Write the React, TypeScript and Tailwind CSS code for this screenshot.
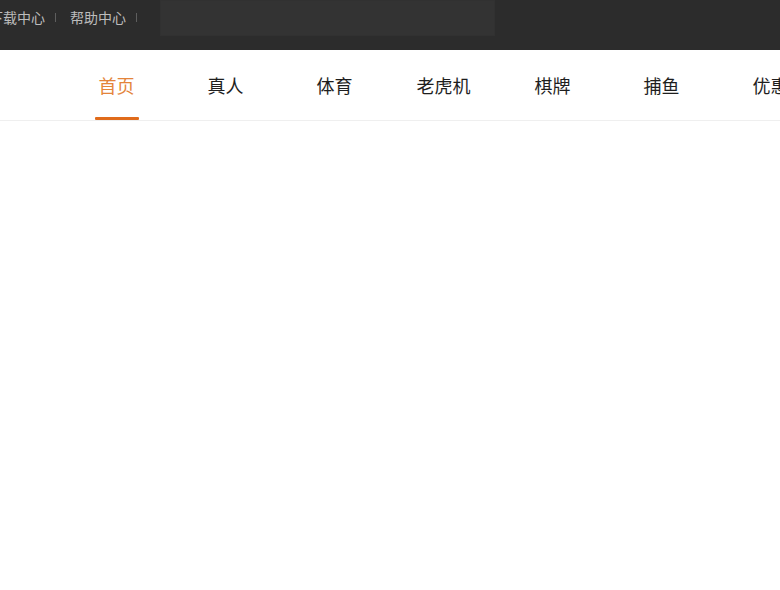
import React from 'react';

const navItems = ['首页', '真人', '体育', '老虎机', '棋牌', '捕鱼', '优惠'];

const Sep: React.FC = () => (
  <span className="mx-[10px] h-[9px] w-px bg-[#5e5e5e]" />
);

const App: React.FC = () => {
  return (
    <div
      className="min-h-[590px] w-[780px] overflow-hidden bg-white"
      style={{ fontFamily: '"Noto Sans CJK SC", "Noto Sans", sans-serif' }}
    >
      <div className="h-[50px] bg-[#2c2c2c]">
        <div className="ml-[-11px] flex h-[34px] items-center">
          <span className="text-[14px] leading-none text-[#bcbcbc]">下载中心</span>
          <Sep />
          <span className="ml-[4px] text-[14px] leading-none text-[#bcbcbc]">帮助中心</span>
          <Sep />
          <div className="ml-[13px] h-[36px] w-[335px] shrink-0 self-start border border-[#313131] bg-[#333333]" />
        </div>
      </div>

      <nav className="h-[71px] border-b border-[#efefef]">
        <ul className="ml-[62px] flex h-full">
          {navItems.map((item, i) => (
            <li key={item} className="flex h-full w-[109px] shrink-0 justify-center">
              <span
                className={
                  'relative flex h-full items-center px-[4px] text-[18px] ' +
                  (i === 0 ? 'text-[#e4843a]' : 'text-[#1e1e1e]')
                }
              >
                {item}
                {i === 0 && (
                  <span className="absolute bottom-0 left-0 h-[3px] w-full rounded-[1px] bg-[#e06b1b]" />
                )}
              </span>
            </li>
          ))}
        </ul>
      </nav>
    </div>
  );
};

export default App;
